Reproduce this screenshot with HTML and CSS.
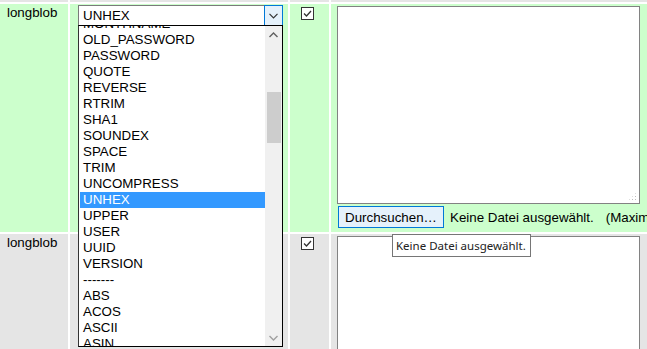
FILE: index.html
```html
<!DOCTYPE html>
<html lang="de">
<head>
  <meta charset="UTF-8" />
  <title>Einfügen</title>
  <link rel="stylesheet" href="styles.css">
</head>
<body>
  <div class="insert-table">
    <!-- vorherige Zeile, nur der Rand ist sichtbar -->
    <div class="cell odd"></div>
    <div class="cell odd"></div>
    <div class="cell odd"></div>
    <div class="cell odd"></div>

    <!-- Zeile mit Maus drüber -->
    <div class="cell hover name">longblob</div>
    <div class="cell hover func">
      <div class="select">
        <span class="select-value">UNHEX</span>
        <span class="select-arrow">
          <svg width="9" height="6" viewBox="0 0 9 6"><polyline points="0.5,0.8 4.5,4.8 8.5,0.8" fill="none" stroke="#333" stroke-width="1.2"/></svg>
        </span>
        <div class="dropdown">
          <ul class="options">
            <li>MONTHNAME</li>
            <li>OLD_PASSWORD</li>
            <li>PASSWORD</li>
            <li>QUOTE</li>
            <li>REVERSE</li>
            <li>RTRIM</li>
            <li>SHA1</li>
            <li>SOUNDEX</li>
            <li>SPACE</li>
            <li>TRIM</li>
            <li>UNCOMPRESS</li>
            <li class="selected">UNHEX</li>
            <li>UPPER</li>
            <li>USER</li>
            <li>UUID</li>
            <li>VERSION</li>
            <li>-------</li>
            <li>ABS</li>
            <li>ACOS</li>
            <li>ASCII</li>
            <li>ASIN</li>
          </ul>
          <div class="scrollbar">
            <span class="scroll-btn">
              <svg width="9" height="6" viewBox="0 0 9 6"><polyline points="0.5,5 4.5,1 8.5,5" fill="none" stroke="#606060" stroke-width="1.4"/></svg>
            </span>
            <div class="scroll-track"><div class="scroll-thumb"></div></div>
            <span class="scroll-btn">
              <svg width="9" height="6" viewBox="0 0 9 6"><polyline points="0.5,1 4.5,5 8.5,1" fill="none" stroke="#a0a0a0" stroke-width="1.4"/></svg>
            </span>
          </div>
        </div>
      </div>
    </div>
    <div class="cell hover null">
      <span class="check"><svg width="11" height="11" viewBox="0 0 11 11"><polyline points="2,5.5 4.5,8 9,3" fill="none" stroke="#333" stroke-width="1.3"/></svg></span>
    </div>
    <div class="cell hover value">
      <div class="textarea"><span class="grip"></span></div>
      <div class="upload">
        <span class="btn-wrap">
          <button class="browse">Durchsuchen…</button>
          <span class="tooltip">Keine Datei ausgewählt.</span>
        </span>
        <span class="file-label">Keine Datei ausgewählt.</span>
        <span class="max-size">(Maximale Größe: 2,048KiB)</span>
      </div>
    </div>

    <!-- nächste Zeile -->
    <div class="cell odd name">longblob</div>
    <div class="cell odd func"></div>
    <div class="cell odd null">
      <span class="check"><svg width="11" height="11" viewBox="0 0 11 11"><polyline points="2,5.5 4.5,8 9,3" fill="none" stroke="#333" stroke-width="1.3"/></svg></span>
    </div>
    <div class="cell odd value">
      <div class="textarea"></div>
    </div>
  </div>
</body>
</html>
```

FILE: styles.css
```css
/* Grundlayout */
body {
  margin: 0;
  background: #fff;
  font-family: "Liberation Sans", Arial, sans-serif;
  font-size: 13.33px;
  color: #000;
  overflow: hidden;
}
.insert-table {
  display: grid;
  grid-template-columns: 68px 218px 39px 420px;
  grid-template-rows: 2px 228px 200px;
  gap: 2px;
  width: 753px;
}
.cell {
  min-width: 0;
}
.odd {
  background: #e5e5e5;
}
.hover {
  background: #ccffcc;
}
.name {
  padding: 1px 7px;
  line-height: 16px;
}
.func {
  padding: 1px 0 0 8px;
}
.null {
  padding: 3px 0 0 11px;
}
.value {
  padding: 2px 0 0 6px;
}

/* Select (geöffnet) */
.select {
  position: relative;
  width: 205px;
  height: 21px;
  box-sizing: border-box;
  border: 1px solid #7a7a7a;
  background: #fff;
  display: flex;
}
.select-value {
  flex: 1;
  padding-left: 4px;
  line-height: 19px;
}
.select-arrow {
  width: 17px;
  margin: -1px -1px -1px 0;
  border: 1px solid #0078d7;
  background: #e5f1fb;
  display: flex;
  align-items: center;
  justify-content: center;
}
.dropdown {
  position: absolute;
  left: -1px;
  top: 19px;
  width: 205px;
  height: 322px;
  box-sizing: border-box;
  border: 1px solid #000;
  border-left-color: #333;
  background: #fff;
  display: flex;
  overflow: hidden;
  z-index: 2;
}
.options {
  flex: 1;
  list-style: none;
  margin: -10px 0 0;
  padding: 0 0 0 1px;
}
.options li {
  height: 16px;
  line-height: 16px;
  padding-left: 3px;
  white-space: nowrap;
}
.options .selected {
  background: #3399ff;
  color: #fff;
}
.scrollbar {
  width: 17px;
  background: #f0f0f0;
  display: flex;
  flex-direction: column;
}
.scroll-btn {
  height: 17px;
  display: flex;
  align-items: center;
  justify-content: center;
}
.scroll-track {
  flex: 1;
}
.scroll-thumb {
  margin: 49px 1px 0 2px;
  height: 51px;
  background: #cdcdcd;
}

/* Checkbox */
.check {
  display: flex;
  align-items: center;
  justify-content: center;
  width: 13px;
  height: 13px;
  box-sizing: border-box;
  border: 1px solid #333;
  background: #fff;
}

/* Textfeld */
.textarea {
  position: relative;
  width: 303px;
  height: 198px;
  box-sizing: border-box;
  border: 1px solid #828282;
  background: #fff;
}
.grip {
  position: absolute;
  right: 2px;
  bottom: 2px;
  width: 9px;
  height: 9px;
  background:
    radial-gradient(circle, #bdbdbd 0.8px, transparent 1px) 0 0 / 3px 3px;
  clip-path: polygon(100% 0, 100% 100%, 0 100%);
}

/* Datei hochladen */
.upload {
  margin-top: 2px;
  padding-left: 1px;
  display: flex;
  align-items: center;
  white-space: nowrap;
}
.btn-wrap {
  position: relative;
}
.browse {
  display: block;
  width: 106px;
  height: 22px;
  padding: 0;
  border: 1px solid #0078d7;
  background: #e5f1fb;
  font: inherit;
  color: #000;
}
.tooltip {
  position: absolute;
  left: 54px;
  top: 28px;
  width: 139px;
  height: 23px;
  box-sizing: border-box;
  padding-left: 3px;
  border: 1px solid #767676;
  background: #fff;
  color: #222;
  font-family: "Noto Sans", sans-serif;
  font-size: 11.5px;
  line-height: 21px;
  z-index: 3;
}
.file-label {
  margin-left: 6px;
}
.max-size {
  margin-left: 12px;
}
```
